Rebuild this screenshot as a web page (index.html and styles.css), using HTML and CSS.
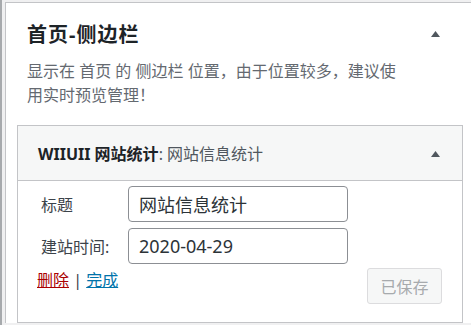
FILE: index.html
```html
<!DOCTYPE html>
<html>
<head>
    <link rel="stylesheet" href="styles.css">
</head>
<body>
    <div class="section">
        <div class="section-head">
            <h2 class="section-title">首页-侧边栏</h2>
            <svg class="toggle toggle-top" width="9" height="6" viewBox="0 0 9 6"><polygon points="0,6 4.5,0 9,6"/></svg>
        </div>
        <p class="section-desc">显示在 首页 的 侧边栏 位置，由于位置较多，建议使用实时预览管理！</p>

        <div class="widget">
            <div class="widget-top">
                <h3 class="widget-title">WIIUII 网站统计<span class="in-title">: 网站信息统计</span></h3>
                <svg class="toggle" width="9" height="6" viewBox="0 0 9 6"><polygon points="0,6 4.5,0 9,6"/></svg>
            </div>
            <div class="widget-inside">
                <div class="fields">
                    <label class="field-label">标题</label>
                    <input class="field-input" type="text" value="网站信息统计">
                    <label class="field-label">建站时间:</label>
                    <input class="field-input" type="text" value="2020-04-29">
                </div>
                <div class="widget-control">
                    <div class="links"><a href="#" class="delete">删除</a> | <a href="#" class="done">完成</a></div>
                    <button class="save-button" disabled>已保存</button>
                </div>
            </div>
        </div>
    </div>
</body>
</html>
```

FILE: styles.css
```css
body {
    margin: 0;
    height: 100vh;
    box-sizing: border-box;
    overflow: hidden;
    background: #f0f0f1;
    border-left: 2px solid #a7aaad;
    font-family: "Noto Sans", "Noto Sans CJK SC", sans-serif;
}
.section {
    margin: 2px 0 0 3px;
    padding: 18px 8px 0 11px;
    background: #fff;
    border: 1px solid #c3c4c7;
    border-right: none;
    border-bottom: none;
}
.section-head {
    display: flex;
    justify-content: space-between;
    padding: 0 23px 0 10px;
}
.section-title {
    margin: 0;
    font-size: 20px;
    line-height: 28px;
    letter-spacing: 1px;
    font-weight: bold;
    color: #1d2327;
}
.toggle {
    fill: #50575e;
}
.toggle-top {
    margin-top: 10px;
}
.section-desc {
    margin: 10px 0 0;
    padding: 0 58px 0 10px;
    font-size: 16px;
    line-height: 24px;
    color: #646970;
}
.widget {
    margin-top: 18px;
    border: 1px solid #c3c4c7;
}
.widget-top {
    display: flex;
    align-items: center;
    justify-content: space-between;
    padding: 16px 22px 14px 20px;
    background: #f6f7f7;
    border-bottom: 1px solid #c3c4c7;
}
.widget-title {
    margin: 0;
    font-size: 16px;
    line-height: 24px;
    font-weight: bold;
    color: #1d2327;
}
.in-title {
    font-weight: normal;
    color: #50575e;
}
.widget-inside {
    padding: 5px 20px 18px 19px;
}
.fields {
    display: grid;
    grid-template-columns: 91px 220px;
    row-gap: 6px;
    align-items: center;
}
.field-label {
    padding-left: 4px;
    font-size: 16px;
    color: #3c434a;
}
.field-input {
    height: 36px;
    box-sizing: border-box;
    padding: 0 10px;
    border: 1px solid #8c8f94;
    border-radius: 4px;
    font: 18px "Noto Sans", "Noto Sans CJK SC", sans-serif;
    color: #2c3338;
}
.widget-control {
    display: flex;
    justify-content: space-between;
    align-items: flex-start;
    margin-top: 4px;
}
.links {
    font-size: 16px;
    line-height: 24px;
    color: #3c434a;
}
.delete {
    color: #a00;
}
.done {
    color: #0073aa;
}
.save-button {
    width: 75px;
    height: 36px;
    padding: 0;
    border: 1px solid #dcdcde;
    border-radius: 3px;
    background: #f6f7f7;
    color: #a7aaad;
    font: 16px "Noto Sans", "Noto Sans CJK SC", sans-serif;
}
```
